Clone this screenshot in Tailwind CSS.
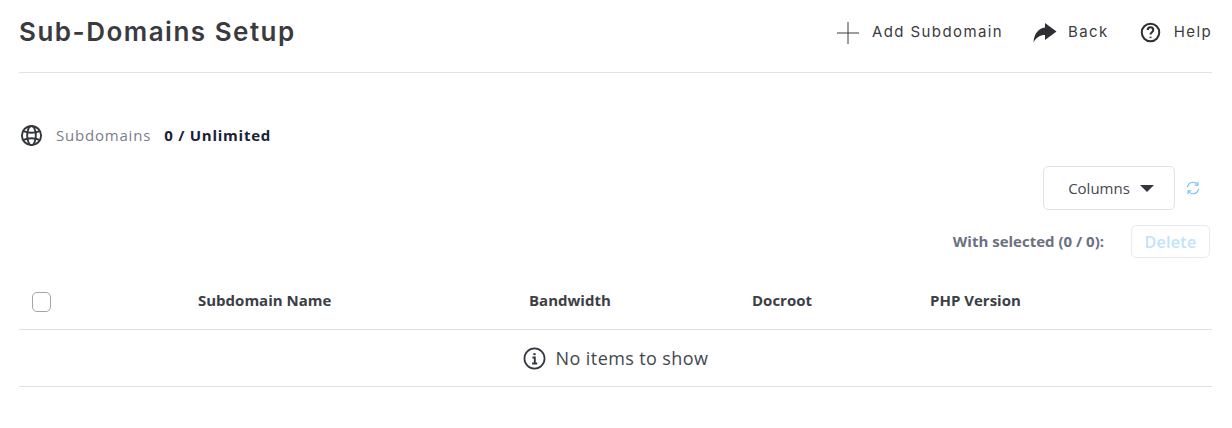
<!DOCTYPE html>
<html><head><script src="https://cdn.jsdelivr.net/npm/@tailwindcss/browser@4"></script></head>
<body class="bg-white font-['Open_Sans',sans-serif] text-[#3b3e46] h-[428px] w-[1232px] overflow-hidden">
<div class="pl-[19px] pr-5">
<header class="flex items-center justify-between h-[73px] border-b border-[#dfe2ea] pb-[9px]">
<h1 class="font-['Inter'] text-[26px] font-semibold tracking-[1.5px] text-[#3b3b3f]">Sub-Domains Setup</h1>
<div class="flex items-center text-[15px] tracking-[1.4px] font-['Inter'] text-[#3b3b3f] mt-[2px]">
<span class="flex items-center gap-[12px]"><svg width="24" height="24" viewBox="0 0 24 24" fill="none" stroke="#3b3b3f" stroke-width="1"><path d="M12 1v22M1 12h22"/></svg>Add Subdomain</span>
<span class="flex items-center gap-[11px] ml-[30px]"><svg width="24" height="20" viewBox="0 0 24 20" fill="#2f2f33"><path d="M23.500 8.500 12 0v4.500C5 5.500 1 11 .5 19.500 3 14.500 7 12 12 12v5z"/></svg>Back</span>
<span class="flex items-center gap-[13px] ml-[31px]"><svg width="21" height="21" viewBox="0 0 24 24" fill="none" stroke="#2f2f33" stroke-width="2.300"><circle cx="12" cy="12" r="10"/><path d="M8.800 9.200a3.200 3.200 0 0 1 6.400 0c0 2.300-3.200 2.600-3.200 5"/><path d="M12 16.800v1.600"/></svg>Help</span>
</div>
</header>
<div class="flex items-center mt-[50px] h-6 text-[15px]">
<svg class="ml-[1px] mt-[1px]" width="23" height="23" viewBox="0 0 24 24" fill="none" stroke="#33373d" stroke-width="2"><circle cx="12" cy="12" r="10"/><ellipse cx="12" cy="12" rx="4.500" ry="10"/><path d="M3.500 7.500c5 2 12 2 17 0M3.500 16.500c5-2 12-2 17 0"/></svg>
<span class="ml-[13px] text-[#7a7d8c] tracking-[0.8px]">Subdomains</span>
<span class="ml-[13px] font-bold tracking-[0.75px] text-[#1a2035]">0 / Unlimited</span>
</div>
<div class="flex justify-end items-center mt-[19px]">
<div class="flex items-center justify-center gap-[10px] w-[132px] h-[44px] pl-[4px] border border-[#e2e2ea] rounded-[5px] text-[15px] text-[#44474f]">Columns<svg width="14" height="7" viewBox="0 0 14 7" fill="#33373d"><path d="M0 0h14L7 7z"/></svg></div>
<svg class="ml-[11px] mr-[12px]" width="14" height="14" viewBox="0 0 24 24" fill="none" stroke="#74c0f5" stroke-width="2"><path d="M2.500 10.500A9.500 9.500 0 0 1 19.500 6M21.500 13.500A9.500 9.500 0 0 1 4.500 18"/><path d="M20.500 1.500v5.500h-5.500M3.500 22.500V17h5.500"/></svg>
</div>
<div class="flex justify-end items-center mt-[15px] pr-[2px]">
<span class="text-[15px] font-bold text-[#6b7080] mr-[27px]">With selected (0 / 0):</span>
<button class="w-[79px] h-[33px] border border-[#e8eaf0] rounded-[5px] text-[16px] tracking-[0.3px] font-semibold text-[#bfe3fb]">Delete</button>
</div>
<div class="flex items-center h-[72px] pt-[13px] border-b border-[#dfdfe8] text-[15px] font-bold">
<div class="w-[179px] pl-[13px]"><div class="w-[19px] h-[20px] mt-[3px] border border-[#a0a3b0] rounded-[5px]"></div></div>
<div class="w-[331px]">Subdomain Name</div><div class="w-[223px]">Bandwidth</div><div class="w-[178px]">Docroot</div><div>PHP Version</div>
</div>
<div class="flex items-center justify-center gap-[10px] h-[57px] border-b border-[#dfdfe8] text-[18px] tracking-[0.4px] text-[#44474f]">
<svg width="23" height="23" viewBox="0 0 24 24" fill="none" stroke="#33373d" stroke-width="1.800"><circle cx="12" cy="12" r="10.500"/><path d="M12 6.500v2" stroke-width="2.500"/><path d="M9.800 11H12.300v6M9.500 17.200h5.300" stroke-width="2"/></svg>No items to show</div>
</div>
</body></html>
